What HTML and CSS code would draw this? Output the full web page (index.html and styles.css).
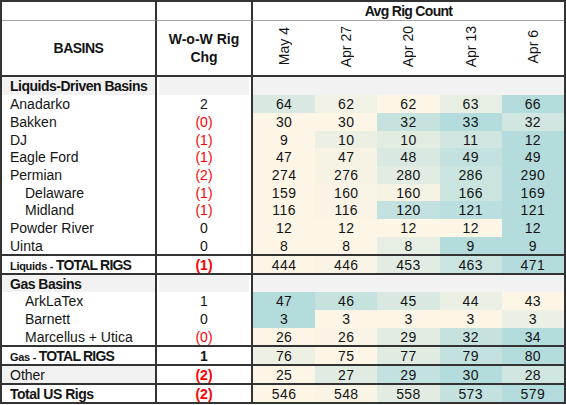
FILE: index.html
```html
<!DOCTYPE html>
<html lang="en">
<head>
<meta charset="utf-8">
<title>Avg Rig Count</title>
<link rel="stylesheet" href="styles.css">
</head>
<body>
<table class="rigs">
  <colgroup>
    <col class="c-name"><col class="c-chg"><col class="c-val"><col class="c-val"><col class="c-val"><col class="c-val"><col class="c-val">
  </colgroup>
  <thead>
    <tr class="h1">
      <th class="name"></th><th class="chg"></th><th colspan="5" class="bold avg">Avg Rig Count</th>
    </tr>
    <tr class="h2">
      <th class="name center bold">BASINS</th>
      <th class="chg bold wow">W-o-W Rig<br>Chg</th>
      <th class="date"><span>May 4</span></th>
      <th class="date"><span>Apr 27</span></th>
      <th class="date"><span>Apr 20</span></th>
      <th class="date"><span>Apr 13</span></th>
      <th class="date"><span>Apr 6</span></th>
    </tr>
  </thead>
  <tbody>
    <tr class="sec"><td class="name bold">Liquids-Driven Basins</td><td class="chg"></td><td colspan="5"></td></tr>
    <tr class="r18"><td class="name">Anadarko</td><td class="chg">2</td><td class="t5">64</td><td class="t15">62</td><td class="t0">62</td><td class="t3">63</td><td class="t10">66</td></tr>
    <tr class="r18"><td class="name">Bakken</td><td class="chg neg">(0)</td><td class="t0">30</td><td class="t0">30</td><td class="t75">32</td><td class="t10">33</td><td class="t6">32</td></tr>
    <tr class="r17"><td class="name">DJ</td><td class="chg neg">(1)</td><td class="t0">9</td><td class="t25">10</td><td class="t35">10</td><td class="t6">11</td><td class="t10">12</td></tr>
    <tr class="r18"><td class="name">Eagle Ford</td><td class="chg neg">(1)</td><td class="t0">47</td><td class="t1">47</td><td class="t5">48</td><td class="t8">49</td><td class="t10">49</td></tr>
    <tr class="r18"><td class="name">Permian</td><td class="chg neg">(2)</td><td class="t0">274</td><td class="t1">276</td><td class="t35">280</td><td class="t7">286</td><td class="t10">290</td></tr>
    <tr class="r17"><td class="name sub">Delaware</td><td class="chg neg">(1)</td><td class="t0">159</td><td class="t05">160</td><td class="t1">160</td><td class="t7">166</td><td class="t10">169</td></tr>
    <tr class="r18"><td class="name sub">Midland</td><td class="chg neg">(1)</td><td class="t0">116</td><td class="t05">116</td><td class="t8">120</td><td class="t9">121</td><td class="t10">121</td></tr>
    <tr class="r18"><td class="name">Powder River</td><td class="chg">0</td><td class="t0">12</td><td class="t0">12</td><td class="t0">12</td><td class="t0">12</td><td class="t10">12</td></tr>
    <tr class="r17"><td class="name">Uinta</td><td class="chg">0</td><td class="t0">8</td><td class="t0">8</td><td class="t3">8</td><td class="t10">9</td><td class="t10">9</td></tr>
    <tr class="tot"><td class="name bold"><span class="small">Liquids - </span><span class="caps">TOTAL RIGS</span></td><td class="chg neg bold">(1)</td><td class="t0">444</td><td class="t05">446</td><td class="t35">453</td><td class="t7">463</td><td class="t10">471</td></tr>
    <tr class="sec tot"><td class="name bold">Gas Basins</td><td class="chg"></td><td colspan="5"></td></tr>
    <tr class="r18"><td class="name sub">ArkLaTex</td><td class="chg">1</td><td class="t10">47</td><td class="t75">46</td><td class="t5">45</td><td class="t25">44</td><td class="t0">43</td></tr>
    <tr class="r18"><td class="name sub">Barnett</td><td class="chg">0</td><td class="t10">3</td><td class="t0">3</td><td class="t0">3</td><td class="t0">3</td><td class="t25">3</td></tr>
    <tr class="r17"><td class="name sub">Marcellus + Utica</td><td class="chg neg">(0)</td><td class="t0">26</td><td class="t05">26</td><td class="t35">29</td><td class="t75">32</td><td class="t10">34</td></tr>
    <tr class="tot"><td class="name bold"><span class="small">Gas - </span><span class="caps">TOTAL RIGS</span></td><td class="chg bold">1</td><td class="t2">76</td><td class="t0">75</td><td class="t4">77</td><td class="t8">79</td><td class="t10">80</td></tr>
    <tr class="tot"><td class="name shade">Other</td><td class="chg neg bold">(2)</td><td class="t0">25</td><td class="t4">27</td><td class="t8">29</td><td class="t10">30</td><td class="t6">28</td></tr>
    <tr class="tot last"><td class="name bold">Total US Rigs</td><td class="chg neg bold">(2)</td><td class="t0">546</td><td class="t05">548</td><td class="t35">558</td><td class="t8">573</td><td class="t10">579</td></tr>
  </tbody>
</table>
</body>
</html>
```
FILE: styles.css
```css
* { box-sizing: border-box; }
body {
  margin: 0;
  background: #fff;
  font-family: "Liberation Sans", Arial, sans-serif;
  color: #141414;
}
.rigs {
  border-collapse: separate;
  border-spacing: 0;
  table-layout: fixed;
  width: 566px;
  border: 2px solid #333;
}
.c-name { width: 155px; }
.c-chg { width: 96px; }
.rigs th, .rigs td {
  padding: 0;
  font-size: 14px;
  font-weight: normal;
  text-align: center;
  vertical-align: middle;
  white-space: nowrap;
  overflow: hidden;
}
.rigs .name {
  text-align: left;
  padding-left: 8px;
  border-right: 2px solid #333;
}
.rigs .name.center { text-align: center; padding-left: 0; }
.rigs .name.sub { padding-left: 23px; }
.rigs .chg { border-right: 2px solid #333; }
.rigs .bold { font-weight: bold; font-size: 14px; letter-spacing: -0.5px; }
.rigs .avg { letter-spacing: -0.7px; }
.rigs .chg.bold { letter-spacing: 0; }
.rigs .small { font-size: 11px; letter-spacing: -0.3px; }
.rigs .caps { letter-spacing: -0.8px; }
.rigs .neg { color: #f00; }
.h1 { height: 19px; }
.h1 th { border-bottom: 1px solid #a6a6a6; }
.h2 { height: 56px; }
.h2 th { border-bottom: 2px solid #333; }
.wow { line-height: 18px; }
.date span {
  display: inline-block;
  writing-mode: vertical-rl;
  transform: rotate(180deg);
  line-height: 16px;
}
.sec { height: 18px; }
.sec td { background: #f2f2f2; }
.sec td.chg { box-shadow: inset 2px 0 0 #fff, inset -2px 0 0 #fff; }
.r18 { height: 18px; }
.r17 { height: 17px; }
.tot { height: 19px; }
.tot td { border-top: 2px solid #333; }
.last { height: 19px; }
.rigs .shade { background: #f2f2f2; }

.t0, .t05, .t1, .t15, .t2, .t25, .t3, .t35, .t4, .t5, .t6, .t7, .t75, .t8, .t9, .t10 {
  letter-spacing: 0.4px;
}
.t0 { background: #fdf5e6; }
.t05 { background: #f9f4e6; }
.t1 { background: #f6f3e5; }
.t15 { background: #f2f1e5; }
.t2 { background: #eef0e4; }
.t25 { background: #ebefe4; }
.t3 { background: #e7eee3; }
.t35 { background: #e3ece3; }
.t4 { background: #e0ebe2; }
.t5 { background: #d9e9e2; }
.t6 { background: #d1e6e1; }
.t7 { background: #cae4e0; }
.t75 { background: #c6e2df; }
.t8 { background: #c3e1df; }
.t9 { background: #bbdfde; }
.t10 { background: #b4dcdd; }
```
